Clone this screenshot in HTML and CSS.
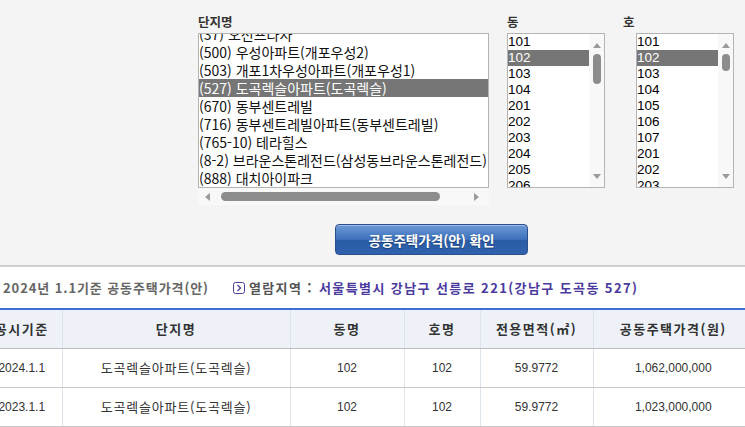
FILE: index.html
```html
<!DOCTYPE html>
<html lang="ko">
<head>
    <meta charset="utf-8">
    <meta name="viewport" content="width=device-width, initial-scale=1.0">
    <title>공동주택가격 열람</title>
    <link rel="stylesheet" href="styles.css">
</head>
<body>
    <div class="search">
        <div class="fields">
            <!-- 단지명 목록 -->
            <div class="field field-apt">
                <div class="label">단지명</div>
                <div class="listbox">
                    <ul class="items apt-items">
                        <li>(37) 오션프라자</li>
                        <li>(500) 우성아파트(개포우성2)</li>
                        <li>(503) 개포1차우성아파트(개포우성1)</li>
                        <li class="on">(527) 도곡렉슬아파트(도곡렉슬)</li>
                        <li>(670) 동부센트레빌</li>
                        <li>(716) 동부센트레빌아파트(동부센트레빌)</li>
                        <li>(765-10) 테라힐스</li>
                        <li>(8-2) 브라운스톤레전드(삼성동브라운스톤레전드)</li>
                        <li>(888) 대치아이파크</li>
                    </ul>
                </div>
                <div class="hscroll">
                    <span class="arr arr-left"></span>
                    <span class="hthumb"></span>
                    <span class="arr arr-right"></span>
                </div>
            </div>
            <!-- 동 목록 -->
            <div class="field field-small">
                <div class="label">동</div>
                <div class="listbox listbox-small">
                    <ul class="items num-items">
                        <li>101</li>
                        <li class="on">102</li>
                        <li>103</li>
                        <li>104</li>
                        <li>201</li>
                        <li>202</li>
                        <li>203</li>
                        <li>204</li>
                        <li>205</li>
                        <li>206</li>
                    </ul>
                    <div class="vscroll">
                        <span class="arr arr-up"></span>
                        <span class="vthumb vthumb-long"></span>
                        <span class="arr arr-down"></span>
                    </div>
                </div>
            </div>
            <!-- 호 목록 -->
            <div class="field field-small field-ho">
                <div class="label label-ho">호</div>
                <div class="listbox listbox-small">
                    <ul class="items num-items">
                        <li>101</li>
                        <li class="on">102</li>
                        <li>103</li>
                        <li>104</li>
                        <li>105</li>
                        <li>106</li>
                        <li>107</li>
                        <li>201</li>
                        <li>202</li>
                        <li>203</li>
                    </ul>
                    <div class="vscroll">
                        <span class="arr arr-up"></span>
                        <span class="vthumb vthumb-short"></span>
                        <span class="arr arr-down"></span>
                    </div>
                </div>
            </div>
        </div>
        <button class="btn-check" type="button">공동주택가격(안) 확인</button>
    </div>

    <div class="result">
        <div class="result-title">
            <span class="base">2024년 1.1기준 공동주택가격(안)</span>
            <span class="area">
                <svg class="ico" width="12" height="12" viewBox="0 0 12 12">
                    <rect x="0.5" y="0.5" width="11" height="11" rx="2" fill="none" stroke="#4a3f9c" stroke-width="1"/>
                    <path d="M4.5 3 L7.5 6 L4.5 9" fill="none" stroke="#4a3f9c" stroke-width="1.3"/>
                </svg>
                열람지역 : <em>서울특별시 강남구 선릉로 221(강남구 도곡동 527)</em>
            </span>
        </div>
        <table class="price-table">
            <colgroup>
                <col class="c1">
                <col class="c2">
                <col class="c3">
                <col class="c4">
                <col class="c5">
                <col class="c6">
            </colgroup>
            <thead>
                <tr>
                    <th>공시기준</th>
                    <th>단지명</th>
                    <th>동명</th>
                    <th>호명</th>
                    <th>전용면적(㎡)</th>
                    <th>공동주택가격(원)</th>
                </tr>
            </thead>
            <tbody>
                <tr>
                    <td>2024.1.1</td>
                    <td class="name">도곡렉슬아파트(도곡렉슬)</td>
                    <td>102</td>
                    <td>102</td>
                    <td>59.9772</td>
                    <td>1,062,000,000</td>
                </tr>
                <tr>
                    <td>2023.1.1</td>
                    <td class="name">도곡렉슬아파트(도곡렉슬)</td>
                    <td>102</td>
                    <td>102</td>
                    <td>59.9772</td>
                    <td>1,023,000,000</td>
                </tr>
            </tbody>
        </table>
    </div>
</body>
</html>
```

FILE: styles.css
```css
* {
    margin: 0;
    padding: 0;
    box-sizing: border-box;
}
body {
    width: 745px;
    height: 427px;
    overflow: hidden;
    background-color: #fff;
    font-family: "Liberation Sans", "Noto Sans CJK KR", sans-serif;
    color: #222;
}
ul {
    list-style: none;
}

/* 상단 검색 영역 */
.search {
    height: 267px;
    background-color: #f4f4f4;
    border-bottom: 2px solid #cfcfcf;
}
.fields {
    display: flex;
    padding: 14px 0 0 198px;
}
.field {
    flex-shrink: 0; /* 화면 밖으로 나가도 줄어들지 않게 */
}
.label {
    height: 19px;
    font-family: "Noto Sans CJK KR", sans-serif;
    font-size: 12.5px;
    font-weight: bold;
    line-height: 15px;
    color: #333;
}
.label-ho {
    margin-left: -13px; /* 호 라벨은 목록보다 왼쪽으로 나와 있음 */
}
.field-apt {
    width: 291px;
    margin-right: 18px;
}
.field-small {
    width: 98px;
    margin-right: 31px;
}
.listbox {
    height: 155px;
    border: 1px solid #b4b4b4;
    background-color: #fff;
    overflow: hidden;
    display: flex;
}
.items {
    flex: 1;
    white-space: nowrap;
    overflow: hidden;
}
.apt-items {
    margin-top: -9px; /* 스크롤된 상태 */
    font-family: "Noto Sans CJK KR", sans-serif;
    font-size: 14px;
    color: #111;
}
.apt-items li {
    height: 18px;
    line-height: 18px;
}
.num-items {
    font-size: 13.5px;
    color: #000;
}
.num-items li {
    height: 16px;
    line-height: 16px;
}
.items li.on {
    background-color: #767676;
    color: #fff;
}

/* 스크롤바 모양 */
.vscroll {
    width: 15px;
    flex-shrink: 0;
    background-color: #f8f8f8;
    display: flex;
    flex-direction: column;
    align-items: center;
    padding-top: 9px;
}
.vthumb {
    width: 8px;
    border-radius: 4px;
    background-color: #8c8c8c;
    margin-top: 6px;
}
.vthumb-long {
    height: 30px;
}
.vthumb-short {
    height: 17px;
}
.arr {
    width: 0;
    height: 0;
    border-style: solid;
    border-color: transparent;
}
.arr-up {
    border-width: 0 4px 5px 4px;
    border-bottom-color: #9a9a9a;
}
.arr-down {
    margin-top: auto;
    margin-bottom: 8px;
    border-width: 5px 4px 0 4px;
    border-top-color: #9a9a9a;
}
.hscroll {
    height: 17px;
    background-color: #f8f8f8;
    display: flex;
    align-items: center;
    padding: 0 10px 0 7px;
}
.arr-left {
    border-width: 4px 5px 4px 0;
    border-right-color: #9a9a9a;
}
.arr-right {
    margin-left: auto;
    border-width: 4px 0 4px 5px;
    border-left-color: #9a9a9a;
}
.hthumb {
    width: 219px;
    height: 9px;
    border-radius: 5px;
    background-color: #8c8c8c;
    margin-left: 11px;
}

.btn-check {
    display: block;
    width: 193px;
    height: 31px;
    margin: 19px 0 0 335px;
    border: 1px solid #2b4f8c;
    border-radius: 4px;
    background: linear-gradient(to bottom, #6c9ad6 0%, #3d70bb 50%, #2b5ca6 52%, #2f61ad 100%);
    box-shadow: inset 0 1px 0 rgba(255, 255, 255, 0.35);
    color: #fff;
    font-family: "Noto Sans CJK KR", sans-serif;
    font-size: 13.5px;
    font-weight: bold;
    text-shadow: 0 1px 1px rgba(0, 0, 0, 0.35);
    cursor: pointer;
}

/* 결과 영역 */
.result {
    background-color: #fff;
}
.result-title {
    height: 41px;
    display: flex;
    align-items: center;
    padding-left: 3px;
    font-family: "Noto Sans CJK KR", sans-serif;
    font-size: 13px;
    font-weight: bold;
    letter-spacing: 0.9px;
    color: #666;
}
.area {
    display: flex;
    align-items: center;
    margin-left: 24px;
    color: #555;
    letter-spacing: 1.4px;
}
.area .ico {
    margin-right: 4px;
}
.area em {
    font-style: normal;
    color: #4a3a9e;
    margin-left: 6px;
}
.price-table {
    width: 771px;
    margin-left: -18px;
    table-layout: fixed;
    border-collapse: collapse;
    border-top: 2px solid #3f6fd6;
}
.c1 { width: 80px; }
.c2 { width: 228px; }
.c3 { width: 114px; }
.c4 { width: 76px; }
.c5 { width: 113px; }
.c6 { width: 160px; }
.price-table th {
    height: 39px;
    background-color: #eef2f8;
    border-bottom: 1px solid #bcbcbc;
    border-left: 1px solid #dde3eb;
    font-family: "Noto Sans CJK KR", sans-serif;
    font-size: 13px;
    font-weight: bold;
    letter-spacing: 1.5px;
    color: #333;
}
.price-table td {
    height: 39px;
    border-bottom: 1px solid #c8c8c8;
    border-left: 1px solid #dde3eb;
    text-align: center;
    font-size: 12px;
    color: #333;
}
.price-table th:first-child,
.price-table td:first-child {
    border-left: none;
}
.price-table td.name {
    font-family: "Noto Sans CJK KR", sans-serif;
    font-size: 13px;
    letter-spacing: 0.8px;
}
```
